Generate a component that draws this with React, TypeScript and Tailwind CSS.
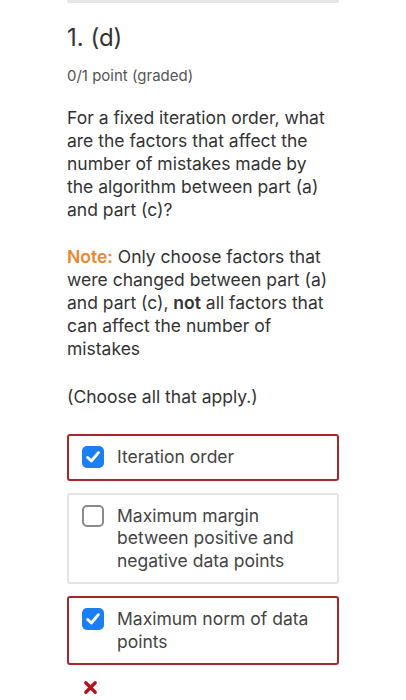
import React from 'react';

interface ChoiceProps {
  label: string;
  checked?: boolean;
  marked?: boolean;
}

const Choice: React.FC<ChoiceProps> = ({ label, checked = false, marked = false }) => {
  return (
    <div
      className={`flex items-start gap-[13px] rounded-[3px] bg-white pl-[13px] pr-3 py-[10px] ${
        marked ? 'border-2 border-[#a8262a]' : 'border-2 border-[#e4e4e4]'
      }`}
    >
      {checked ? (
        <span className="flex h-[22px] w-[22px] shrink-0 items-center justify-center rounded-[5px] bg-[#1b7ef3]">
          <svg viewBox="0 0 20 20" className="h-[18px] w-[18px]" fill="none">
            <path d="M4 10.5 L8.2 14.5 L16 5.2" stroke="#fff" strokeWidth="3.2" strokeLinecap="round" strokeLinejoin="round" />
          </svg>
        </span>
      ) : (
        <span className="h-[22px] w-[22px] shrink-0 rounded-[5px] border-2 border-[#8a8a8a] bg-white" />
      )}
      <span className="text-[17.5px] leading-[22.5px] text-[#444]">{label}</span>
    </div>
  );
};

export default function App() {
  return (
    <div className="min-h-[700px] bg-white font-['Inter','Liberation_Sans',sans-serif] text-[#3a3a3a]">
      <div className="mx-auto w-[272px]">
        {/* end of previous block */}
        <div className="h-[3px] rounded-b-[2px] bg-[#e6e6e6]" />

        <h2 className="mt-[20px] text-[24px] leading-[30px] font-normal text-[#333]">1. (d)</h2>
        <p className="mt-[14px] text-[15px] leading-[18px] text-[#555]">0/1 point (graded)</p>

        <div className="mt-[21px] w-[264px] text-[17.5px] leading-[23px] text-[#333]">
          <p>
            For a fixed iteration order, what are the factors that affect the number of mistakes made by the algorithm
            between part (a) and part (c)?
          </p>
          <p className="mt-[24px]">
            <span className="font-semibold text-[#e8882e]">Note:</span> Only choose factors that were changed between
            part (a) and part (c), <strong className="font-semibold">not</strong> all factors that can affect the number
            of mistakes
          </p>
          <p className="mt-[25px]">(Choose all that apply.)</p>
        </div>

        <div className="mt-[26px] flex flex-col gap-[12px]">
          <Choice label="Iteration order" checked marked />
          <Choice label="Maximum margin between positive and negative data points" />
          <Choice label="Maximum norm of data points" checked marked />
        </div>

        <div className="mt-[15px] pl-[16px]">
          <svg viewBox="0 0 16 16" className="h-[15px] w-[15px]">
            <path d="M3 3 L13 13 M13 3 L3 13" stroke="#b3121a" strokeWidth="3.6" strokeLinecap="round" />
          </svg>
        </div>
      </div>
    </div>
  );
}
